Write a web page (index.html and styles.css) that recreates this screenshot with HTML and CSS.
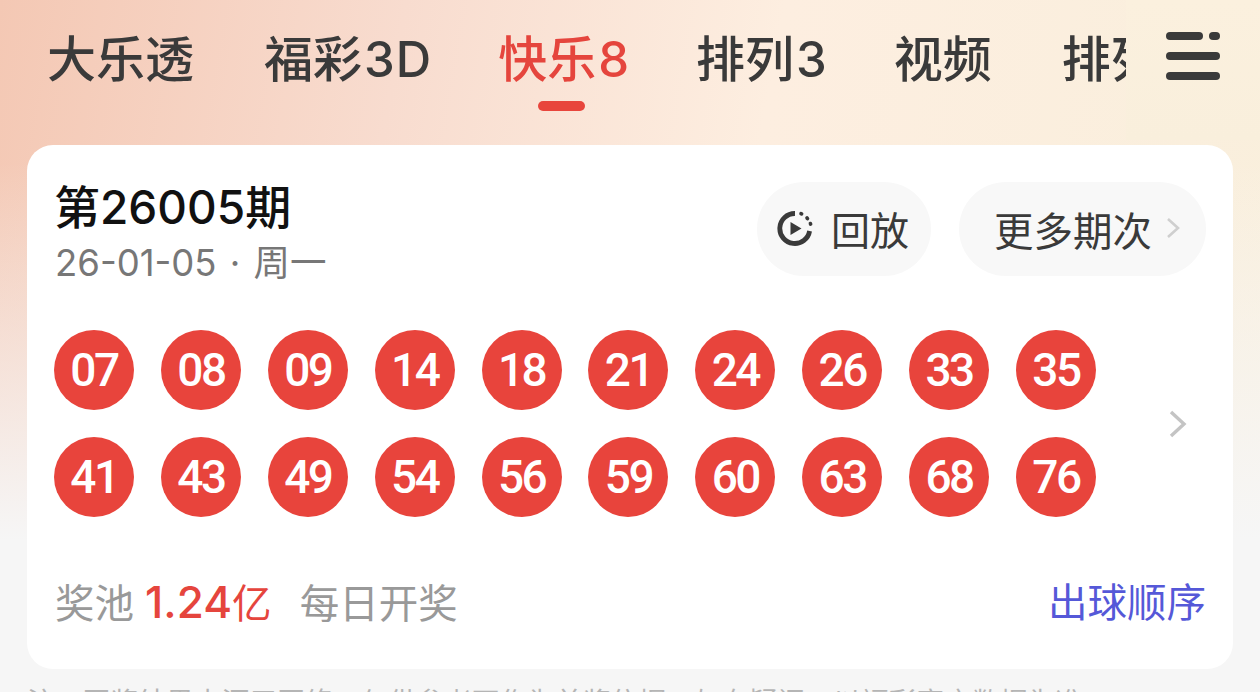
FILE: index.html
```html
<!DOCTYPE html>
<html lang="zh-CN">
<head>
    <meta charset="UTF-8">
    <meta name="viewport" content="width=device-width, initial-scale=1.0">
    <title>快乐8</title>
    <link rel="stylesheet" href="styles.css">
</head>
<body>
    <div class="page">
        <div class="top-bg"></div>
        <div class="tabs-row">
            <div class="tabs">
                <a class="tab">大乐透</a>
                <a class="tab">福彩<span class="num">3D</span></a>
                <a class="tab active">快乐<span class="num">8</span></a>
                <a class="tab">排列<span class="num">3</span></a>
                <a class="tab">视频</a>
                <a class="tab">排列<span class="num">5</span></a>
            </div>
            <div class="menu-box">
                <svg class="menu-icon" width="54" height="50" viewBox="0 0 54 50">
                    <g fill="none" stroke="#3a3a3a" stroke-width="8" stroke-linecap="round">
                        <path d="M4 4H33"/>
                        <path d="M47 4H50"/>
                        <path d="M4 24H50"/>
                        <path d="M4 44H50"/>
                    </g>
                </svg>
            </div>
        </div>

        <div class="card">
            <div class="card-head">
                <div>
                    <div class="issue">第26005期</div>
                    <div class="issue-date">26-01-05 · 周一</div>
                </div>
                <div class="head-btns">
                    <a class="pill replay">
                        <svg width="36" height="36" viewBox="0 0 36 36">
                            <path d="M18 3.5A15 15 0 1 0 32.6 21" fill="none" stroke="#3a3a3a" stroke-width="4.8"/>
                            <path d="M24 3.6l.6.3M30 8l.5.6M33.4 13.5l.2.6" fill="none" stroke="#3a3a3a" stroke-width="3.6" stroke-linecap="round"/>
                            <path d="M13.5 12L24.5 18.5L13.5 25Z" fill="#3a3a3a"/>
                        </svg>
                        <span>回放</span>
                    </a>
                    <a class="pill more">
                        <span>更多期次</span>
                        <svg width="16" height="24" viewBox="0 0 16 24">
                            <path d="M3 3L13 12L3 21" fill="none" stroke="#cfcfcf" stroke-width="2.6"/>
                        </svg>
                    </a>
                </div>
            </div>

            <div class="balls-wrap">
                <div class="balls">
                    <span class="ball">07</span><span class="ball">08</span><span class="ball">09</span><span class="ball">14</span><span class="ball">18</span>
                    <span class="ball">21</span><span class="ball">24</span><span class="ball">26</span><span class="ball">33</span><span class="ball">35</span>
                    <span class="ball">41</span><span class="ball">43</span><span class="ball">49</span><span class="ball">54</span><span class="ball">56</span>
                    <span class="ball">59</span><span class="ball">60</span><span class="ball">63</span><span class="ball">68</span><span class="ball">76</span>
                </div>
                <svg class="balls-arrow" width="20" height="30" viewBox="0 0 20 30">
                    <path d="M3 3L16 15L3 27" fill="none" stroke="#c4c4c4" stroke-width="3.4"/>
                </svg>
            </div>

            <div class="card-foot">
                <div class="pool">
                    <span>奖池</span>
                    <span class="pool-num"><span class="pool-digits">1.24</span>亿</span>
                    <span class="pool-daily">每日开奖</span>
                </div>
                <a class="order-link">出球顺序</a>
            </div>
        </div>

        <p class="note">注：开奖结果来源于网络，仅供参考不作为兑奖依据，如有疑问，以福彩官方数据为准</p>
    </div>
</body>
</html>
```

FILE: styles.css
```css
* {
    box-sizing: border-box;
}
html, body {
    margin: 0;
    height: 100%;
    overflow: hidden;
}
body {
    font-family: "Inter", "Noto Sans CJK SC", sans-serif;
    background-color: #f6f6f6;
}
a {
    color: inherit;
    text-decoration: none;
}
.page {
    position: relative;
    height: 692px;
    overflow: hidden;
}
.top-bg {
    position: absolute;
    left: 0;
    right: 0;
    top: 0;
    height: 540px;
    background:
        linear-gradient(to bottom, rgba(246, 246, 246, 0) 0%, rgba(246, 246, 246, 0) 30%, #f6f6f6 100%),
        linear-gradient(100deg, #f4c8b4 0%, #f8dccf 30%, #fdeee0 58%, #f9efdc 100%);
}
.tabs-row {
    position: relative;
    display: flex;
    height: 145px;
}
.tabs {
    display: flex;
    gap: 70px;
    flex: 1;
    min-width: 0;
    padding: 27px 0 0 47px;
    overflow: hidden;
}
.tab {
    position: relative;
    flex: none;
    height: 66px;
    font-size: 49px;
    font-weight: 500;
    line-height: 66px;
    color: #3a3a3a;
    white-space: nowrap;
}
.tab .num {
    margin: 0 -4px 0 2px;
    letter-spacing: 1px;
}
.tab.active {
    color: #e5453d;
}
.tab.active::after {
    content: "";
    position: absolute;
    left: 50%;
    top: 74px;
    width: 47px;
    height: 10px;
    margin-left: -24px;
    border-radius: 5px;
    background-color: #e8453c;
}
.menu-box {
    flex: none;
    width: 134px;
    height: 140px;
    padding: 32px 0 0 40px;
    background: linear-gradient(to bottom, #fbf0de, #f9efdc);
}
.menu-icon {
    display: block;
}
.card {
    position: relative;
    height: 524px;
    margin: 0 27px;
    padding: 34px 27px 0 28px;
    background-color: #ffffff;
    border-radius: 26px;
}
.card-head {
    display: flex;
    justify-content: space-between;
}
.issue {
    font-size: 46px;
    line-height: 56px;
    font-weight: 500;
    color: #111111;
    margin-left: -1px;
}
.issue-date {
    font-size: 36.5px;
    line-height: 56px;
    word-spacing: 3px;
    color: #777777;
}
.head-btns {
    display: flex;
    gap: 28px;
    margin-top: 3px;
}
.pill {
    display: flex;
    align-items: center;
    height: 94px;
    padding-bottom: 2px;
    border-radius: 47px;
    background-color: #f8f8f8;
    font-size: 39px;
    color: #3a3a3a;
}
.replay {
    width: 174px;
    padding-left: 20px;
    gap: 18px;
}
.more {
    width: 247px;
    padding-left: 35px;
    gap: 13px;
    font-size: 39.5px;
}
.balls-wrap {
    position: relative;
    margin-top: 39px;
    margin-left: -1px;
}
.balls {
    display: grid;
    grid-template-columns: repeat(10, 80px);
    column-gap: 26.9px;
    row-gap: 27px;
}
.ball {
    width: 80px;
    height: 80px;
    border-radius: 50%;
    background-color: #e8443c;
    color: #ffffff;
    font-family: "Roboto", "Noto Sans", sans-serif;
    font-size: 46px;
    font-weight: 500;
    letter-spacing: -2.5px;
    line-height: 80px;
    text-align: center;
}
.balls-arrow {
    position: absolute;
    right: 18px;
    top: 79px;
}
.card-foot {
    display: flex;
    justify-content: space-between;
    align-items: center;
    margin-top: 58px;
    font-size: 39.5px;
    line-height: 54px;
}
.pool {
    color: #999999;
}
.pool-num {
    color: #e5453d;
}
.pool-digits {
    font-size: 44px;
    font-weight: 500;
}
.pool-daily {
    margin-left: 17px;
}
.order-link {
    color: #5558d8;
}
.note {
    position: relative;
    margin: 13px 0 0 27px;
    font-size: 27.8px;
    line-height: 40px;
    color: #b5b5b5;
    white-space: nowrap;
}
```
